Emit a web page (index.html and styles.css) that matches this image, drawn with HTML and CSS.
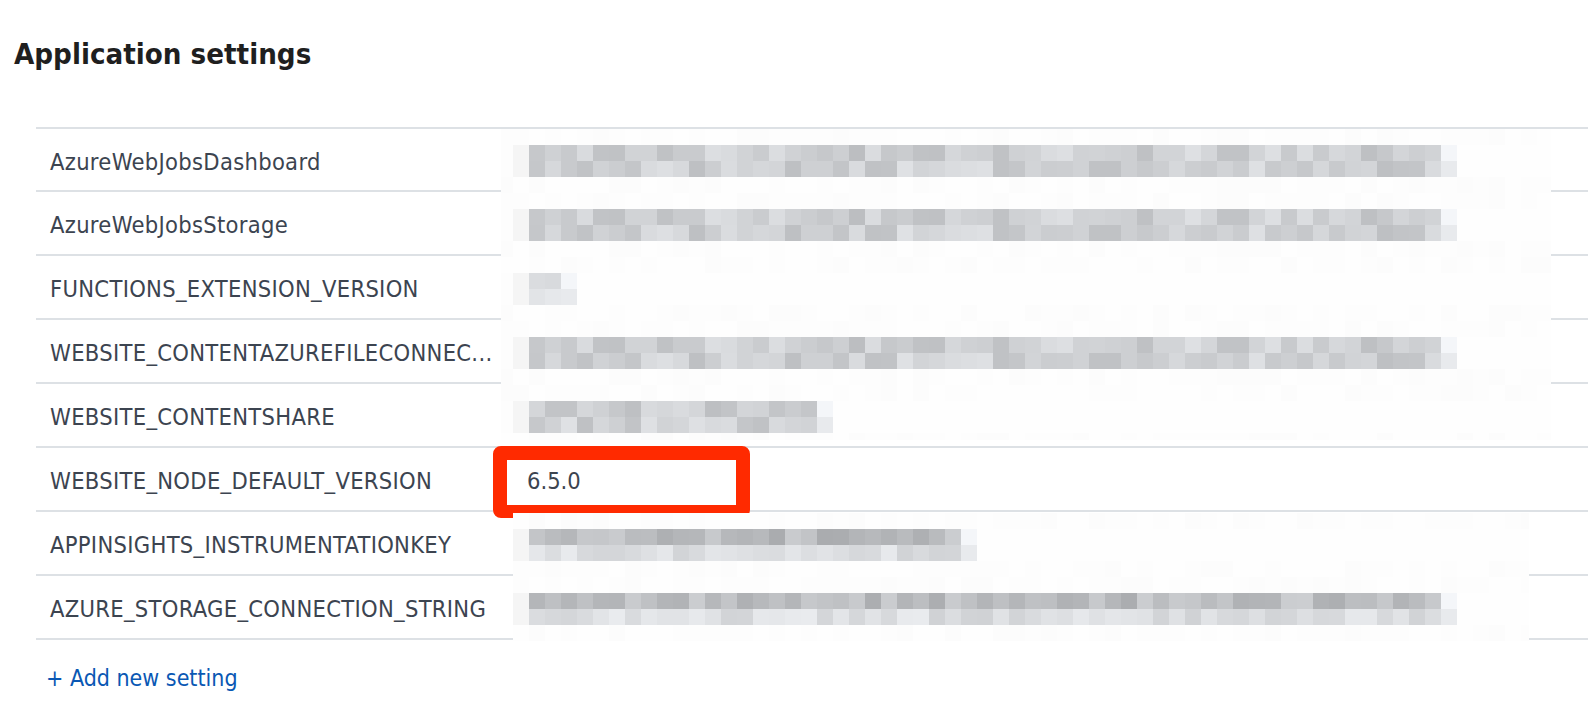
FILE: index.html
```html
<!DOCTYPE html>
<html lang="en">
<head>
<meta charset="utf-8">
<title>Application settings</title>
<link rel="stylesheet" href="styles.css">
</head>
<body>
<main class="page">
  <h1 class="title">Application settings</h1>
  <div class="settings">
    <div class="row">
      <div class="label">AzureWebJobsDashboard</div>
      <div class="value"></div>
      <div class="blur blur-wide" data-seed="11" data-n="57" data-tone="even"></div>
    </div>
    <div class="row">
      <div class="label">AzureWebJobsStorage</div>
      <div class="value"></div>
      <div class="blur blur-wide" data-seed="11" data-n="57" data-tone="even"></div>
    </div>
    <div class="row">
      <div class="label">FUNCTIONS_EXTENSION_VERSION</div>
      <div class="value"></div>
      <div class="blur blur-wide" data-seed="5" data-n="2" data-tone="light"></div>
    </div>
    <div class="row">
      <div class="label">WEBSITE_CONTENTAZUREFILECONNEC...</div>
      <div class="value"></div>
      <div class="blur blur-wide" data-seed="11" data-n="57" data-tone="even"></div>
    </div>
    <div class="row">
      <div class="label">WEBSITE_CONTENTSHARE</div>
      <div class="value"></div>
      <div class="blur blur-short" data-seed="23" data-n="18" data-tone="even"></div>
    </div>
    <div class="row">
      <div class="label">WEBSITE_NODE_DEFAULT_VERSION</div>
      <div class="value">6.5.0</div>
      <div class="highlight"></div>
    </div>
    <div class="row">
      <div class="label">APPINSIGHTS_INSTRUMENTATIONKEY</div>
      <div class="value"></div>
      <div class="blur blur-narrow" data-seed="37" data-n="27" data-tone="split"></div>
    </div>
    <div class="row">
      <div class="label">AZURE_STORAGE_CONNECTION_STRING</div>
      <div class="value"></div>
      <div class="blur blur-narrow" data-seed="41" data-n="57" data-tone="split"></div>
    </div>
  </div>
  <a class="add" href="#">+ Add new setting</a>
</main>
<script src="script.js"></script>
</body>
</html>
```

FILE: styles.css
```css
html, body {
  margin: 0;
  padding: 0;
  background: #ffffff;
}

.page {
  font-family: "DejaVu Sans Condensed", "DejaVu Sans", sans-serif;
  color: #3c4450;
}

.title {
  margin: 0 0 55px 14px;
  padding-top: 36px;
  font-size: 29.2px;
  line-height: 36px;
  font-weight: bold;
  color: #1f1f1f;
}

.settings {
  margin-left: 36px;
  border-top: 2px solid #dde1e5;
}

.row {
  position: relative;
  display: grid;
  grid-template-columns: 465px 1fr;
  align-items: center;
  height: 62px;
  box-sizing: content-box;
  border-bottom: 2px solid #dde1e5;
  font-size: 23.5px;
  letter-spacing: 0.3px;
}

.row:first-child {
  height: 61px;
}

.label {
  padding: 4px 4px 0 14px;
  white-space: nowrap;
  overflow: hidden;
}

.value {
  padding: 4px 0 0 26px;
  white-space: nowrap;
  letter-spacing: 0;
}

.blur {
  position: absolute;
  left: 461px;
  top: 1px;
  display: grid;
  grid-template-columns: repeat(66, 16px);
  grid-auto-rows: 16px;
  background: #ffffff;
}

.row:first-child .blur {
  top: 0;
}

.blur-wide {
  clip-path: inset(0 2px 0 4px);
}

.blur-short {
  clip-path: inset(0 2px 9px 4px);
}

.blur-narrow {
  clip-path: inset(0 24px 0 16px);
}

.cell {
  display: block;
}

.highlight {
  position: absolute;
  left: 457px;
  top: -2px;
  width: 257px;
  height: 72px;
  box-sizing: border-box;
  border: 14px solid #ff2a00;
  border-bottom-width: 13px;
  border-radius: 8px;
}

.add {
  display: inline-block;
  margin: 25px 0 0 46px;
  font-size: 23px;
  color: #0a58b4;
  text-decoration: none;
}
```

FILE: script.js
```js
function rng(seed) {
  return function () {
    seed |= 0;
    seed = (seed + 0x6D2B79F5) | 0;
    let t = Math.imul(seed ^ (seed >>> 15), 1 | seed);
    t = (t + Math.imul(t ^ (t >>> 7), 61 | t)) ^ t;
    return ((t ^ (t >>> 14)) >>> 0) / 4294967296;
  };
}

const tones = {
  even: [[190, 224], [192, 225]],
  split: [[172, 206], [210, 236]],
  light: [[214, 222], [226, 232]]
};

document.querySelectorAll('.blur').forEach(function (el) {
  const r = rng(+el.dataset.seed);
  const n = +el.dataset.n;
  const tone = tones[el.dataset.tone];
  for (let y = 0; y < 4; y++) {
    for (let x = 0; x < 66; x++) {
      let v;
      let tint = true;
      if (y === 0 || y === 3) {
        v = 252 + r() * 2.5;
        tint = false;
      } else if (x === 0) {
        v = 253;
        tint = false;
      } else if (x === 1) {
        v = 245;
        tint = false;
      } else if (x < 2 + n) {
        const lo = tone[y - 1][0], hi = tone[y - 1][1];
        v = lo + r() * (hi - lo);
      } else if (x === 2 + n) {
        v = y === 1 ? 246 : 234;
      } else {
        v = 254;
        tint = false;
      }
      const c = document.createElement('span');
      c.className = 'cell';
      const R = Math.min(255, Math.round(tint ? v - 2 : v));
      const G = Math.min(255, Math.round(v));
      const B = Math.min(255, Math.round(tint ? v + 3 : v));
      c.style.background = 'rgb(' + R + ',' + G + ',' + B + ')';
      el.appendChild(c);
    }
  }
});
```
